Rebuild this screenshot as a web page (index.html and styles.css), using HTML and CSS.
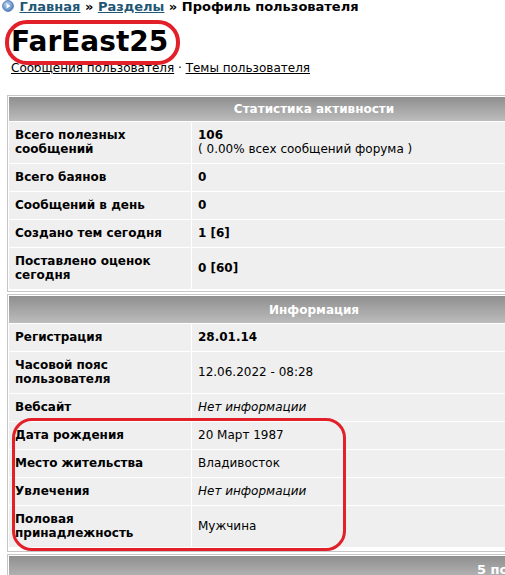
FILE: index.html
```html
<!DOCTYPE html>
<html lang="ru">
<head>
<meta charset="utf-8">
<link rel="stylesheet" href="styles.css">
</head>
<body>
<div class="page">
  <div class="crumbs">
    <svg class="crumb-icon" width="12" height="12" viewBox="0 0 12 12"><defs><radialGradient id="g" cx="0.4" cy="0.35" r="0.7"><stop offset="0" stop-color="#b9d3f0"/><stop offset="1" stop-color="#4f7fc0"/></radialGradient></defs><circle cx="6" cy="6" r="5.4" fill="url(#g)" stroke="#3f6aa8" stroke-width="0.8"/><path d="M4.6 3.4 L8.4 6 L4.6 8.6 Z" fill="#fff"/></svg>
    <a href="#" class="crumb-link">Главная</a> » <a href="#" class="crumb-link">Разделы</a> » Профиль пользователя
  </div>
  <h1 class="username">FarEast25</h1>
  <div class="userlinks"><a href="#">Сообщения пользователя</a> · <a href="#">Темы пользователя</a></div>

  <div class="box box-first">
    <table class="stats">
      <tr><th colspan="2">Статистика активности</th></tr>
      <tr><td class="lbl">Всего полезных сообщений</td><td class="val"><b>106</b><br>( 0.00% всех сообщений форума )</td></tr>
      <tr><td class="lbl">Всего баянов</td><td class="val"><b>0</b></td></tr>
      <tr><td class="lbl">Сообщений в день</td><td class="val"><b>0</b></td></tr>
      <tr><td class="lbl">Создано тем сегодня</td><td class="val"><b>1 [6]</b></td></tr>
      <tr><td class="lbl">Поставлено оценок сегодня</td><td class="val"><b>0 [60]</b></td></tr>
    </table>
  </div>

  <div class="box box-info">
    <table class="stats">
      <tr><th colspan="2" class="th-tall">Информация</th></tr>
      <tr><td class="lbl">Регистрация</td><td class="val"><b>28.01.14</b></td></tr>
      <tr><td class="lbl">Часовой пояс пользователя</td><td class="val">12.06.2022 - 08:28</td></tr>
      <tr><td class="lbl">Вебсайт</td><td class="val"><i>Нет информации</i></td></tr>
      <tr><td class="lbl">Дата рождения</td><td class="val">20 Март 1987</td></tr>
      <tr><td class="lbl">Место жительства</td><td class="val">Владивосток</td></tr>
      <tr><td class="lbl">Увлечения</td><td class="val"><i>Нет информации</i></td></tr>
      <tr><td class="lbl">Половая принадлежность</td><td class="val">Мужчина</td></tr>
    </table>
  </div>

  <div class="box">
    <table class="stats">
      <tr><th colspan="2" class="th-right">5 последних сообщений</th></tr>
    </table>
  </div>

  <div class="mark mark-name"></div>
  <div class="mark mark-info"></div>
</div>
</body>
</html>
```

FILE: styles.css
```css
html, body {
  margin: 0;
  padding: 0;
  overflow: hidden;
  background: #fff;
}
.page {
  position: relative;
  font-family: "DejaVu Sans", Verdana, sans-serif;
  font-size: 12px;
  color: #000;
  width: 640px;
}
.crumbs {
  margin-top: -1px;
  padding-left: 2px;
  font-size: 13px;
  font-weight: bold;
  line-height: 16px;
  white-space: nowrap;
}
.crumb-icon {
  vertical-align: -1px;
  margin-right: 1px;
}
.crumb-link {
  color: #1e5673;
  text-decoration: underline;
}
.username {
  margin: 11px 0 0 11px;
  font-size: 28px;
  font-weight: bold;
  line-height: 32px;
}
.userlinks {
  margin: 3px 0 0 11px;
  font-size: 12px;
  line-height: 14px;
}
.userlinks a {
  color: #000;
  text-decoration: underline;
}
.box {
  margin: 2px 0 0 7px;
  width: 610px;
  border: 1px solid #c6c6c6;
  padding: 1px;
  background: #fff;
}
.box-first {
  margin-top: 20px;
}
.box-info {
  padding-bottom: 3px;
}
.stats {
  width: 100%;
  border-collapse: collapse;
  font-size: 12px;
  line-height: 14px;
}
.stats th {
  height: 24px;
  padding: 0;
  background: linear-gradient(#8f8f8f, #bcbcbc);
  color: #fff;
  font-weight: bold;
  text-align: center;
  border-bottom: 1px solid #fff;
}
.stats th.th-tall {
  height: 27px;
}
.stats th.th-right {
  text-align: left;
  padding: 2px 0 0 468px;
  white-space: nowrap;
  font-size: 13px;
}
.stats td {
  background: #efefef;
  padding: 6px 6px 7px 6px;
  border-bottom: 1px solid #fff;
  vertical-align: middle;
}
.stats td.lbl {
  width: 170px;
  font-weight: bold;
  border-right: 1px solid #fff;
}
.mark {
  position: absolute;
  border: 4px solid #e2202a;
  pointer-events: none;
}
.mark-name {
  left: 5px;
  top: 21px;
  width: 167px;
  height: 37px;
  border-radius: 22px;
}
.mark-info {
  left: 12px;
  top: 419px;
  width: 328px;
  height: 127px;
  border-width: 3px;
  border-radius: 20px;
}
```
